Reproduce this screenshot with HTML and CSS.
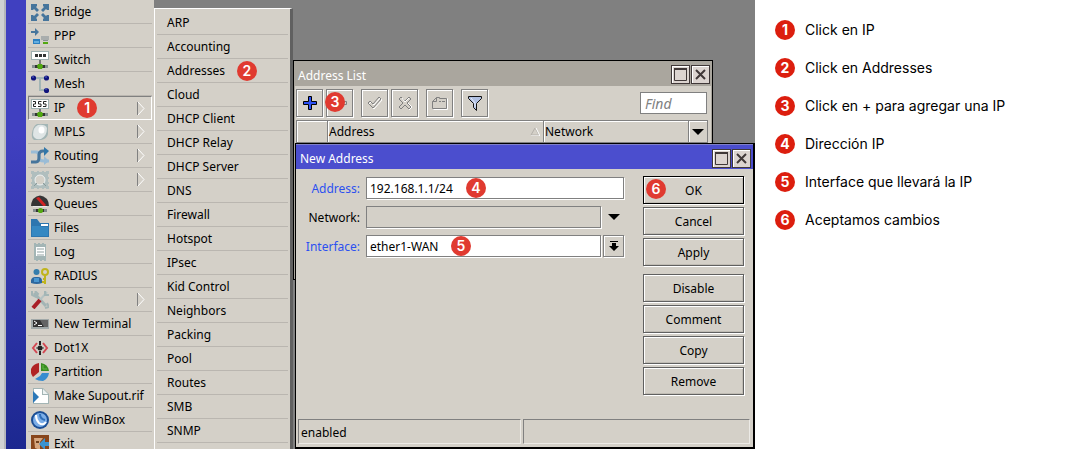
FILE: index.html
```html
<!DOCTYPE html>
<html lang="es">
<head>
    <meta charset="utf-8">
    <title>WinBox - Address List</title>
    <link rel="stylesheet" href="styles.css">
</head>
<body>
    <main class="desktop">
        <div class="edge"></div>
        <div class="brand"></div>
        <nav class="menu">
            <a href="#"><svg class="icon" viewBox="0 0 18 18"><g fill="#46759c"><path id="arm" d="M0 1h6v2l-1 1 3 3-2 2-3-3-1 1H0z"/><use href="#arm" transform="matrix(-1 0 0 1 18 0)"/><use href="#arm" transform="matrix(1 0 0 -1 0 19)"/><use href="#arm" transform="matrix(-1 0 0 -1 18 19)"/></g></svg>Bridge</a>
            <a href="#"><svg class="icon" viewBox="0 0 18 18"><path d="M0 4h4V1l4 4-4 4V6H0z" fill="#46759c"/><path d="M10 9h8v4h-8z" fill="#a9adad"/><path d="M2 12h7v5H2z" fill="#2c7fc0"/><path d="M3 14h5v2H3z" fill="#63aee0"/><path d="M12 13h5v1h-5z" fill="#889292"/><path d="M12 15h5v2h-5z" fill="#53a811"/></svg>PPP</a>
            <a href="#"><svg class="icon" viewBox="0 0 18 18"><path d="M0 0h18v9H0z" fill="#9fb0b0"/><path d="M1 1h16v7H1z" fill="#fff"/><path d="M4 3h3v3H4zM8 3h3v3H8zM12 3h3v3h-3z" fill="#333"/><path d="M8 9h2v4H8z" fill="#777"/><path d="M1 14h16v3H1z" fill="#889090"/><path d="M4 14h10v3H4z" fill="#333"/><path d="M7 13h4l1 2-1 3H7l-1-3z" fill="#53a811"/></svg>Switch</a>
            <a href="#"><svg class="icon" viewBox="0 0 18 18"><path d="M4 3h10M9 3v12h6" fill="none" stroke="#a3b5b5" stroke-width="2"/><g fill="#10147c"><circle cx="2.500" cy="3" r="2.600"/><circle cx="15.500" cy="3" r="2.600"/><circle cx="15.500" cy="15.500" r="2.600"/></g><path d="M1 2h2M14 2h2M14 14h2" stroke="#5a68c8"/></svg>Mesh</a>
            <a href="#" class="active"><svg class="icon" viewBox="0 0 18 18"><path d="M0 0h18v10H0z" fill="#9fb0b0"/><path d="M1 1h16v8H1z" fill="#fff"/><path d="M2 2.500h2.500v2.500h-2v2.500h2.500M10.500 2.500h-3v2.500h2.500v2.500h-3M15.500 2.500h-3v2.500h2.500v2.500h-3" fill="none" stroke="#222"/><path d="M8 10h2v3H8z" fill="#777"/><path d="M1 14h16v3H1z" fill="#889090"/><path d="M4 14h10v3H4z" fill="#333"/><path d="M7 13h4l1 2-1 3H7l-1-3z" fill="#53a811"/></svg>IP<span class="badge">1</span><svg class="more" viewBox="0 0 8 15"><path d="M.5 14V1" stroke="#808080"/><path d="M1 1l6 6.500L1 14" fill="none" stroke="#fff"/></svg></a>
            <a href="#"><svg class="icon" viewBox="0 0 18 18"><path d="M6 1h11v10q-1 5-7 6H3q-3-2-2-7 1-7 5-9z" fill="#a3b5b5"/><path d="M7 2q7-1 9 3 0 8-6 11-7 1-8-4 0-8 5-10z" fill="#dfe5e5"/><ellipse cx="10.500" cy="7" rx="3" ry="3.500" fill="#fff"/></svg>MPLS<svg class="more" viewBox="0 0 8 15"><path d="M.5 14V1" stroke="#808080"/><path d="M1 1l6 6.500L1 14" fill="none" stroke="#fff"/></svg></a>
            <a href="#"><svg class="icon" viewBox="0 0 18 18"><path d="M0 5h5q3 0 3 4v1q0 4 5 4h5" fill="none" stroke="#9abcd6" stroke-width="3"/><path d="M13 9l5 5-5 4z" fill="#9abcd6"/><path d="M0 15h5q3 0 3-5V8q0-4 4-4h2" fill="none" stroke="#46759c" stroke-width="3"/><path d="M13 0l5 4-5 5z" fill="#3277a9"/></svg>Routing<svg class="more" viewBox="0 0 8 15"><path d="M.5 14V1" stroke="#808080"/><path d="M1 1l6 6.500L1 14" fill="none" stroke="#fff"/></svg></a>
            <a href="#"><svg class="icon" viewBox="0 0 18 18"><path d="M0 0h3v1h3V0h2v1h3V0h2v1h2V0h3v3h-1v3h1v2h-1v3h1v2h-1v2h1v3h-3v-1h-2v1h-2v-1H8v1H6v-1H3v1H0v-3h1v-2H0v-2h1V8H0V6h1V3H0z" fill="#b0bebe"/><circle cx="9" cy="9" r="5" fill="#d4d0c8" stroke="#eef2f2"/><path d="M3 15l3-3M15 15l-3-3" stroke="#899a9a"/></svg>System<svg class="more" viewBox="0 0 8 15"><path d="M.5 14V1" stroke="#808080"/><path d="M1 1l6 6.500L1 14" fill="none" stroke="#fff"/></svg></a>
            <a href="#"><svg class="icon" viewBox="0 0 18 18"><path d="M0 11q0-3 2-7 7-7 14 0 2 3 2 7z" fill="#363636"/><path d="M5 3l3-1 7 8-2 2z" fill="#d32323"/><path d="M2 11h14v1H2z" fill="#e8e8e8"/><path d="M2 14h14v3H2z" fill="#858d8d"/><path d="M5 14h8v3H5z" fill="#333"/><circle cx="9.500" cy="15.500" r="2.600" fill="#53a811"/></svg>Queues</a>
            <a href="#"><svg class="icon" viewBox="0 0 18 18"><path d="M0 0h6l3 4h9v14H0z" fill="#2d76af"/><path d="M10 5h7v2h-7z" fill="#fff"/><path d="M1 7h8l2 1h6v9H1z" fill="#3588c2"/></svg>Files</a>
            <a href="#"><svg class="icon" viewBox="0 0 18 18"><path d="M3 0h2v1h2V0h2v1h2V0h2v1h2v17h-2v-1h-2v1H9v-1H7v1H5v-1H3z" fill="#a3b5b5"/><path d="M5 4h9v9H5z" fill="#fff"/><path d="M6 6h7M6 9h7M6 12h7" stroke="#93a3a3"/></svg>Log</a>
            <a href="#"><svg class="icon" viewBox="0 0 18 18"><circle cx="5.500" cy="5" r="3" fill="#357dac"/><path d="M0 16v-3q1-3 4-3h3q4 0 4 4v2q-5 2-11 0z" fill="#2c679e"/><path d="M3 11h5v4H3z" fill="#4996d0"/><circle cx="14" cy="5" r="3" fill="none" stroke="#c0b41c" stroke-width="2"/><path d="M14 8v9M14 15h-3M14 12h-2" stroke="#c0b41c" stroke-width="2"/></svg>RADIUS</a>
            <a href="#"><svg class="icon" viewBox="0 0 18 18"><path d="M3 2l12 13" stroke="#a3b5b5" stroke-width="3"/><path d="M1 0v4l4 2 2-3-3-3M14 17l4-1-2-4" fill="none" stroke="#a3b5b5" stroke-width="2"/><path d="M16 1l-8 9" stroke="#b4c2c2" stroke-width="2"/><path d="M14 0v4h4" fill="none" stroke="#a3b5b5" stroke-width="2"/><path d="M9 9L2 17" stroke="#a91f27" stroke-width="4"/></svg>Tools<svg class="more" viewBox="0 0 8 15"><path d="M.5 14V1" stroke="#808080"/><path d="M1 1l6 6.500L1 14" fill="none" stroke="#fff"/></svg></a>
            <a href="#"><svg class="icon" viewBox="0 0 18 18"><path d="M0 4h18v10H0z" fill="#a0a8a8"/><path d="M2 5h15v7H2z" fill="#333"/><path d="M9 5h8v7h-4z" fill="#646464"/><path d="M3 6l3 2-3 2M7 10.500h4" fill="none" stroke="#fff"/></svg>New Terminal</a>
            <a href="#"><svg class="icon" viewBox="0 0 18 18"><path d="M6 4L2 9l4 5M12 4l4 5-4 5" fill="none" stroke="#d34852" stroke-width="2"/><path d="M9 2v4M9 12v4" stroke="#222" stroke-width="2"/><path d="M5 9h8" stroke="#444"/><circle cx="9" cy="9" r="2.500" fill="#222"/></svg>Dot1X</a>
            <a href="#"><svg class="icon" viewBox="0 0 18 18"><path d="M8 0v9l-6 5Q-1 10 0 6q2-5 8-6z" fill="#b02323"/><path d="M10 0q7 1 8 8h-8z" fill="#398d20"/><path d="M4 16l5-3 2-3h7q-1 6-6 8-5 0-8-2z" fill="#368cd0"/><path d="M12 2v4h4" fill="none" stroke="#65b848"/></svg>Partition</a>
            <a href="#"><svg class="icon" viewBox="0 0 18 18"><path d="M2 1h10l6 6v10H2z" fill="#a3b5b5"/><path d="M3 2h8v6h6v8H3z" fill="#fff"/><path d="M12 2v5h5z" fill="#edf2f2"/><path d="M2 4l6 6-6 6z" fill="#2c78b8"/></svg>Make Supout.rif</a>
            <a href="#"><svg class="icon" viewBox="0 0 18 18"><circle cx="9" cy="9" r="9" fill="#1b4e94"/><circle cx="9" cy="9" r="7" fill="#7caee8"/><path d="M5 4q0 5 3 8 4 3 7-1" fill="none" stroke="#fff" stroke-width="2"/><path d="M9 3q0 5 5 6" fill="none" stroke="#2f6eb8" stroke-width="2"/></svg>New WinBox</a>
            <a href="#"><svg class="icon" viewBox="0 0 18 18"><path d="M0 0h18v18H0z" fill="#88451a"/><path d="M3 3h9l-3 4v8l-5-2z" fill="#d6a67e"/><path d="M5 6h3v2H5z" fill="#70401c"/><path d="M8 9l6-6v4h4v4h-4v4z" fill="#3b93cf"/></svg>Exit</a>
        </nav>

        <nav class="menu submenu">
            <a href="#">ARP</a>
            <a href="#">Accounting</a>
            <a href="#">Addresses<span class="badge">2</span></a>
            <a href="#">Cloud</a>
            <a href="#">DHCP Client</a>
            <a href="#">DHCP Relay</a>
            <a href="#">DHCP Server</a>
            <a href="#">DNS</a>
            <a href="#">Firewall</a>
            <a href="#">Hotspot</a>
            <a href="#">IPsec</a>
            <a href="#">Kid Control</a>
            <a href="#">Neighbors</a>
            <a href="#">Packing</a>
            <a href="#">Pool</a>
            <a href="#">Routes</a>
            <a href="#">SMB</a>
            <a href="#">SNMP</a>
        </nav>

        <section class="window list-window">
            <header class="titlebar">
                <h2>Address List</h2>
                <button class="win-button" aria-label="Maximize"><svg viewBox="0 0 13 13"><path d="M.5 1v11.500h12V1" fill="none" stroke="#403838"/><path d="M0 1h13" stroke="#403838" stroke-width="2"/></svg></button>
                <button class="win-button" aria-label="Close"><svg viewBox="0 0 13 13"><path d="M2 2l9 9M11 2l-9 9" stroke="#403838" stroke-width="2"/></svg></button>
            </header>
            <div class="toolbar">
                <div class="tool-group">
                    <button class="tool" aria-label="Add"><svg viewBox="0 0 18 18"><path d="M7.500 2.500h3v5h5v3h-5v5h-3v-5h-5v-3h5z" fill="#2c50f4" stroke="#000"/></svg></button>
                    <button class="tool" aria-label="Remove" disabled><svg viewBox="0 0 18 18"><path d="M2.500 7.500h13v3h-13z" fill="none" stroke="#808080"/></svg></button>
                    <span class="badge over">3</span>
                </div>
                <div class="tool-group">
                    <button class="tool" aria-label="Enable" disabled><svg viewBox="0 0 18 18"><path d="M3 10l2-2 3 3 6-7 2 2-8 9z" fill="none" stroke="#fff"/><path d="M2 9l2-2 3 3 6-7 2 2-8 9z" fill="none" stroke="#808080"/></svg></button>
                    <button class="tool" aria-label="Disable" disabled><svg viewBox="0 0 18 18"><path id="cross" d="M3 5l2-2 4 4 4-4 2 2-4 4 4 4-2 2-4-4-4 4-2-2 4-4z" fill="none" stroke="#808080"/><path d="M6 4l3 4 4-4M12 9l4 4-3 3" fill="none" stroke="#fff"/></svg></button>
                </div>
                <div class="tool-group">
                    <button class="tool" aria-label="Comment" disabled><svg viewBox="0 0 18 18"><path d="M2.500 15.500h14v-11" fill="none" stroke="#fff"/><path d="M1.500 14.500v-7l4-4h3v1h7v10zM5.500 3.500v4h-4M8 7.500h2M11 7.500h3" fill="none" stroke="#808080"/></svg></button>
                </div>
                <div class="tool-group">
                    <button class="tool" aria-label="Filter"><svg viewBox="0 0 18 18"><path d="M2.500 2.500h13v2l-5 5v7l-3-3v-4l-5-5z" fill="#b0c0e2" stroke="#111"/><path d="M5 4l4 5v4" fill="none" stroke="#e8eefc"/></svg></button>
                </div>
                <input class="find" type="text" placeholder="Find" aria-label="Find">
            </div>
            <table class="list">
                <thead>
                    <tr>
                        <th class="flag"></th>
                        <th class="col-address"><span class="head">Address<svg class="sort" viewBox="0 0 10 9"><path d="M5 1L1 8h8z" fill="none" stroke="#b4b0aa"/><path d="M6 1l4 8H1" fill="none" stroke="#fff"/></svg></span></th>
                        <th>Network</th>
                        <th class="col-menu"><svg class="down" viewBox="0 0 12 6"><path d="M0 0h12L6 6z"/></svg></th>
                    </tr>
                </thead>
            </table>
        </section>

        <section class="window form-window">
            <header class="titlebar">
                <h2>New Address</h2>
                <button class="win-button" aria-label="Maximize"><svg viewBox="0 0 13 13"><path d="M.5 1v11.500h12V1" fill="none" stroke="#403838"/><path d="M0 1h13" stroke="#403838" stroke-width="2"/></svg></button>
                <button class="win-button" aria-label="Close"><svg viewBox="0 0 13 13"><path d="M2 2l9 9M11 2l-9 9" stroke="#403838" stroke-width="2"/></svg></button>
            </header>
            <form class="form">
                <div class="fields">
                    <div class="field">
                        <label class="changed" for="address">Address:</label>
                        <input id="address" type="text" value="192.168.1.1/24">
                        <span class="badge at-address">4</span>
                    </div>
                    <div class="field">
                        <label for="network">Network:</label>
                        <input id="network" type="text" disabled>
                        <button class="drop plain" type="button" aria-label="Show network"><svg class="down" viewBox="0 0 12 6"><path d="M0 0h12L6 6z"/></svg></button>
                    </div>
                    <div class="field">
                        <label class="changed" for="interface">Interface:</label>
                        <input id="interface" type="text" value="ether1-WAN">
                        <button class="drop" type="button" aria-label="Choose interface"><svg class="choose" viewBox="0 0 10 10"><path d="M1 0h8v1H1zM3 2h4v3h3l-5 5-5-5h3z"/></svg></button>
                        <span class="badge at-interface">5</span>
                    </div>
                </div>
                <div class="actions">
                    <button class="default" type="button"><span class="badge at-ok">6</span>OK</button>
                    <button type="button">Cancel</button>
                    <button type="button">Apply</button>
                    <button class="second" type="button">Disable</button>
                    <button type="button">Comment</button>
                    <button type="button">Copy</button>
                    <button type="button">Remove</button>
                </div>
            </form>
            <footer class="status">
                <span>enabled</span>
                <span></span>
            </footer>
        </section>
    </main>

    <aside class="legend">
        <ol>
            <li><span class="badge">1</span>Click en IP</li>
            <li><span class="badge">2</span>Click en Addresses</li>
            <li><span class="badge">3</span>Click en + para agregar una IP</li>
            <li><span class="badge">4</span>Dirección IP</li>
            <li><span class="badge">5</span>Interface que llevará la IP</li>
            <li><span class="badge">6</span>Aceptamos cambios</li>
        </ol>
    </aside>
</body>
</html>
```

FILE: styles.css
```css
* {
    box-sizing: border-box;
}

body {
    display: flex;
    height: 100vh;
    margin: 0;
    overflow: hidden;
    background: white;
    color: black;
    font-family: 'Noto Sans', sans-serif;
    font-size: 12px;
    line-height: 16px;
}

button, input {
    font: inherit;
    color: inherit;
}

svg {
    display: block;
    flex: none;
}

.desktop {
    position: relative;
    display: flex;
    flex: 1;
    background: #808080;
    overflow: hidden;
}

.edge {
    width: 6px;
    background: #d0d2d2;
    border-right: 2px solid #b4b6ba;
}

.brand {
    width: 20px;
    background: linear-gradient(#4040c0 30%, #1c2890);
}

/* menus */
.menu {
    width: 128px;
    padding: 0 2px;
    background: #d4d0c8;
}

.menu a {
    display: flex;
    align-items: center;
    height: 24px;
    padding: 0 3px;
    border-bottom: 1px solid #bab6b0;
    color: black;
    text-decoration: none;
    white-space: nowrap;
}

.menu a.active {
    border: 1px solid;
    border-color: #808080 white white #808080;
    padding: 0 2px;
}

.icon {
    width: 18px;
    height: 18px;
    margin-right: 5px;
}

.more {
    width: 8px;
    height: 15px;
    margin-left: auto;
    margin-right: 4px;
}

.menu .badge {
    margin-left: 12px;
}

.submenu {
    position: absolute;
    top: 8px;
    bottom: 0;
    left: 154px;
    width: 139px;
    padding: 2px 2px 0;
    border: 1px solid white;
    border-right: 3px solid #606060;
    border-bottom: none;
}

.submenu a {
    padding: 0 10px;
}

.badge {
    display: flex;
    flex: none;
    align-items: center;
    justify-content: center;
    width: 20px;
    height: 20px;
    border-radius: 50%;
    background: #e03a30;
    color: white;
    font-family: Inter, sans-serif;
    font-size: 14px;
    font-weight: 600;
}

/* windows */
.window {
    position: absolute;
    display: flex;
    flex-direction: column;
    background: #d4d0c8;
    border: 1px solid black;
}

.list-window {
    top: 60px;
    left: 293px;
    width: 420px;
    height: 220px;
    box-shadow: inset 0 0 0 1px #aaa69e;
}

.form-window {
    top: 143px;
    left: 295px;
    right: 0;
    bottom: 0;
    border-right-width: 2px;
    border-bottom-width: 2px;
}

.titlebar {
    display: flex;
    align-items: center;
    gap: 1px;
    height: 25px;
    padding: 2px 2px 0 4px;
    background: #aaa69e;
    color: white;
}

.form-window .titlebar {
    background: #4b4ece;
    border-top: 1px solid #8080c8;
}

.titlebar h2 {
    flex: 1;
    margin: 0;
    padding-top: 2px;
    font-size: 12px;
    font-weight: normal;
}

.win-button {
    display: grid;
    place-items: center;
    width: 19px;
    height: 19px;
    padding: 0;
    border: 1px solid #403838;
    background: #dcd4d0;
    box-shadow: inset 1px 1px white;
}

.win-button svg {
    width: 13px;
    height: 13px;
}

.toolbar {
    display: flex;
    align-items: center;
    gap: 8px;
    padding: 3px 5px 3px 2px;
}

.tool-group {
    position: relative;
    display: flex;
    gap: 3px;
}

.tool {
    display: grid;
    place-items: center;
    width: 27px;
    height: 28px;
    padding: 0;
    border: 1px solid #808080;
    background: #d4d0c8;
    box-shadow: inset 1px 1px white, 1px 1px white;
}

.tool svg {
    width: 18px;
    height: 18px;
}

.badge.over {
    position: absolute;
    top: 3px;
    left: 29px;
}

.find {
    width: 67px;
    height: 22px;
    margin-left: auto;
    padding: 0 4px;
    border: 1px solid #808080;
    font-size: 14px;
    font-style: italic;
}

.find::placeholder {
    color: #808080;
    opacity: 1;
}

.list {
    width: 412px;
    margin-left: 2px;
    border-collapse: collapse;
    table-layout: fixed;
}

.list th {
    height: 22px;
    padding: 0 1px;
    border: 1px solid #808080;
    box-shadow: inset 1px 1px white;
    font-weight: normal;
    text-align: left;
}

.list .flag {
    width: 31px;
}

.list .col-address {
    width: 216px;
}

.list .col-menu {
    width: 19px;
    padding: 0 3px;
}

.head {
    display: flex;
    align-items: center;
    justify-content: space-between;
}

.sort {
    width: 10px;
    height: 9px;
    margin-right: 2px;
}

.down {
    width: 12px;
    height: 6px;
}

/* new address form */
.form {
    display: flex;
    flex: 1;
    justify-content: space-between;
    gap: 19px;
    padding: 7px 9px 0 2px;
}

.fields {
    display: flex;
    flex: 1;
    flex-direction: column;
    gap: 7px;
    padding-top: 1px;
}

.field {
    position: relative;
    display: flex;
    align-items: center;
    gap: 2px;
}

.field label {
    width: 62px;
    margin-right: 4px;
    padding-top: 2px;
    text-align: right;
}

.field .changed {
    color: #2c50f0;
}

.field input {
    flex: 1;
    min-width: 0;
    height: 22px;
    padding: 0 3px;
    border: 1px solid #808080;
    background: white;
    box-shadow: 1px 1px white;
}

.field input:disabled {
    background: #d4d0c8;
}

.drop {
    display: grid;
    place-items: center;
    width: 21px;
    height: 22px;
    padding: 0;
    border: 1px solid #808080;
    background: #d4d0c8;
    box-shadow: inset 1px 1px white, 1px 1px white;
}

.drop.plain {
    border: none;
    box-shadow: none;
}

.choose {
    width: 10px;
    height: 10px;
}

.at-address, .at-interface {
    position: absolute;
    top: 1px;
    left: 168px;
}

.at-interface {
    left: 153px;
}

.actions {
    display: flex;
    flex-direction: column;
    gap: 3px;
    width: 101px;
}

.actions button {
    position: relative;
    height: 28px;
    padding: 2px 0 0;
    border: 1px solid #606060;
    background: #d4d0c8;
    box-shadow: inset 1px 1px white, inset -1px -1px #c0bcb4, 1px 1px white;
}

.actions .default {
    border-color: black;
}

.actions .second {
    margin-top: 5px;
}

.at-ok {
    position: absolute;
    top: 2px;
    left: 2px;
}

.status {
    display: grid;
    grid-template-columns: 49fr 50fr;
    gap: 2px;
    padding: 0 3px 3px 2px;
}

.status span {
    height: 25px;
    padding: 5px 2px 3px;
    border: 1px solid;
    border-color: #808080 #eceae6 #eceae6 #808080;
}

/* legend */
.legend {
    flex: 0 0 320px;
    padding: 20px;
    font-family: Inter, sans-serif;
    font-size: 14px;
    line-height: 20px;
}

.legend ol {
    display: flex;
    flex-direction: column;
    gap: 18px;
    margin: 0;
    padding: 0;
    list-style: none;
}

.legend li {
    display: flex;
    align-items: center;
    gap: 10px;
}

.legend .badge {
    background: #dc1e0e;
    font-weight: 700;
}
```
